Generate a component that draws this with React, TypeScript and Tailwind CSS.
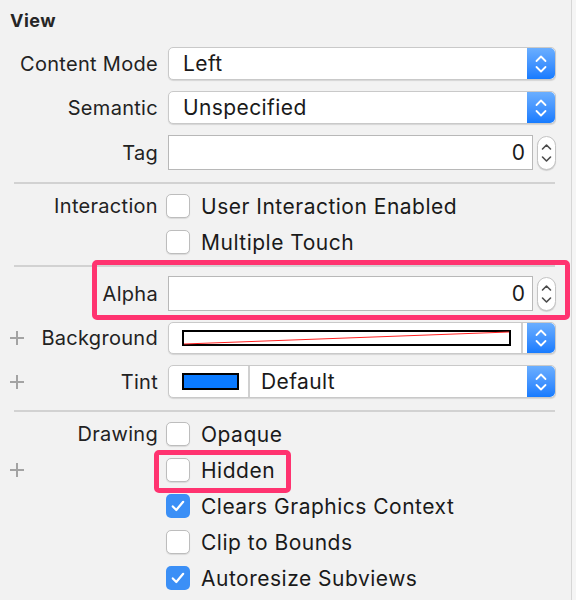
import type { ReactNode } from "react";

function Plus() {
  return (
    <svg width="14" height="14" viewBox="0 0 14 14" className="block">
      <path d="M7 0v14M0 7h14" stroke="#a3a3a3" strokeWidth="2" />
    </svg>
  );
}

function Chevrons({ color = "#fff", width = 1.8 }: { color?: string; width?: number }) {
  return (
    <svg width="12" height="22" viewBox="0 0 12 22" fill="none">
      <path d="M1.5 8 L6 3.5 L10.5 8" stroke={color} strokeWidth={width} strokeLinecap="round" strokeLinejoin="round" />
      <path d="M1.5 14 L6 18.5 L10.5 14" stroke={color} strokeWidth={width} strokeLinecap="round" strokeLinejoin="round" />
    </svg>
  );
}

function PopupArrows() {
  return (
    <div className="flex w-[28px] shrink-0 items-center justify-center self-stretch rounded-r-[5px] bg-gradient-to-b from-[#6aaeff] to-[#157bff]">
      <Chevrons />
    </div>
  );
}

function Stepper() {
  return (
    <div className="flex h-[34px] w-[19px] items-center justify-center rounded-full border border-[#c4c4c4] bg-white shadow-[0_1px_1px_rgba(0,0,0,0.15)]">
      <svg width="11" height="24" viewBox="0 0 11 24" fill="none">
        <path d="M1.5 8 L5.5 4 L9.5 8" stroke="#4a4a4a" strokeWidth="1.6" strokeLinecap="round" strokeLinejoin="round" />
        <path d="M1.5 16 L5.5 20 L9.5 16" stroke="#4a4a4a" strokeWidth="1.6" strokeLinecap="round" strokeLinejoin="round" />
      </svg>
    </div>
  );
}

function Row({ label, plus, className, children }: { label?: string; plus?: boolean; className?: string; children: ReactNode }) {
  return (
    <div className={`flex items-center ${className ?? ""}`}>
      <div className="flex w-[158px] shrink-0 items-center justify-between pl-[10px]">
        <span>{plus && <Plus />}</span>
        <span className="text-[20px] leading-none tracking-[0.3px] text-[#222]">{label}</span>
      </div>
      {children}
    </div>
  );
}

function Popup({ value }: { value: string }) {
  return (
    <div className="ml-[10px] flex h-[33px] w-[388px] items-stretch rounded-[5px] border border-[#c9c9c9] bg-white shadow-[0_1px_1px_rgba(0,0,0,0.12)]">
      <div className="flex flex-1 items-center pl-[14px] text-[21px] tracking-[0.4px] text-[#1a1a1a]">{value}</div>
      <PopupArrows />
    </div>
  );
}

function NumberField({ value }: { value: string }) {
  return (
    <div className="ml-[10px] flex items-center gap-[4px]">
      <div className="flex h-[35px] w-[365px] items-center justify-end border border-[#b8b8b8] bg-white pr-[7px] text-[21px] text-[#1a1a1a]">
        {value}
      </div>
      <Stepper />
    </div>
  );
}

function Check({ label, checked, className }: { label: string; checked?: boolean; className?: string }) {
  return (
    <div className={`flex h-[24px] items-center ${className ?? ""}`}>
      {checked ? (
        <div className="flex h-[24px] w-[24px] items-center justify-center rounded-[5px] bg-[#3b8ff6]">
          <svg width="14" height="12" viewBox="0 0 14 12" fill="none">
            <path d="M1.8 6.4 L5.3 10 L12.2 1.8" stroke="#fff" strokeWidth="2.2" strokeLinecap="round" strokeLinejoin="round" />
          </svg>
        </div>
      ) : (
        <div className="h-[24px] w-[24px] rounded-[5px] border border-[#bdbdbd] bg-white shadow-[0_1px_1px_rgba(0,0,0,0.1)]" />
      )}
      <span className="ml-[11px] text-[21px] leading-none tracking-[0.5px] text-[#1a1a1a]">{label}</span>
    </div>
  );
}

function Separator({ className }: { className?: string }) {
  return <div className={`ml-[14px] mr-[16px] h-[2px] bg-[#d2d2d2] ${className ?? ""}`} />;
}

export default function App() {
  return (
    <div className="flex h-[600px] w-[576px] overflow-hidden bg-[#f5f5f5] font-['Inter',sans-serif]">
      <div className="w-[572px] shrink-0 border-r border-[#d6d6d6] bg-[#f2f2f2]">
        <div className="h-[47px] pl-[10px] pt-[7px] text-[18px] font-bold tracking-[0.5px] text-[#262626]">View</div>

        <Row label="Content Mode" className="h-[33px]">
          <Popup value="Left" />
        </Row>
        <Row label="Semantic" className="mt-[11px] h-[33px]">
          <Popup value="Unspecified" />
        </Row>
        <Row label="Tag" className="mt-[11px] h-[35px]">
          <NumberField value="0" />
        </Row>

        <Separator className="mt-[12px]" />

        <Row label="Interaction" className="mt-[10px] h-[24px]">
          <Check label="User Interaction Enabled" className="ml-[8px]" />
        </Row>
        <Row className="mt-[12px] h-[24px]">
          <Check label="Multiple Touch" className="ml-[8px]" />
        </Row>

        <Separator className="mt-[11px]" />

        <div className="relative mt-[9px]">
          <Row label="Alpha" className="h-[35px]">
            <NumberField value="0" />
          </Row>
          <div className="pointer-events-none absolute left-[92px] top-[-16px] h-[60px] w-[478px] rounded-[5px] border-[5px] border-[#ff3370]" />
        </div>

        <Row label="Background" plus className="mt-[11px] h-[32px]">
          <div className="ml-[10px] flex h-[32px] w-[388px] items-stretch rounded-[5px] border border-[#c9c9c9] bg-white shadow-[0_1px_1px_rgba(0,0,0,0.12)]">
            <div className="flex flex-1 items-center border-r-2 border-[#d0d0d0] pl-[13px] pr-[10px]">
              <svg width="329" height="16" viewBox="0 0 329 16" className="block">
                <rect x="1" y="1" width="327" height="14" fill="#fff" stroke="#000" strokeWidth="2" />
                <path d="M2 14 L327 2" stroke="#ff2020" strokeWidth="1" />
              </svg>
            </div>
            <div className="w-[6px]" />
            <PopupArrows />
          </div>
        </Row>

        <Row label="Tint" plus className="mt-[11px] h-[33px]">
          <div className="ml-[10px] flex h-[33px] w-[388px] items-stretch rounded-[5px] border border-[#c9c9c9] bg-white shadow-[0_1px_1px_rgba(0,0,0,0.12)]">
            <div className="flex w-[81px] items-center border-r-2 border-[#d0d0d0] pl-[13px]">
              <div className="h-[17px] w-[57px] border-2 border-black bg-[#0a7aff]" />
            </div>
            <div className="flex flex-1 items-center pl-[11px] text-[21px] tracking-[0.4px] text-[#1a1a1a]">Default</div>
            <PopupArrows />
          </div>
        </Row>

        <Separator className="mt-[12px]" />

        <Row label="Drawing" className="mt-[10px] h-[24px]">
          <Check label="Opaque" className="ml-[8px]" />
        </Row>
        <div className="relative mt-[12px]">
          <Row plus className="h-[24px]">
            <Check label="Hidden" className="ml-[8px]" />
          </Row>
          <div className="pointer-events-none absolute left-[154px] top-[-8px] h-[43px] w-[137px] rounded-[5px] border-[5px] border-[#ff3370]" />
        </div>
        <Row className="mt-[12px] h-[24px]">
          <Check label="Clears Graphics Context" checked className="ml-[8px]" />
        </Row>
        <Row className="mt-[12px] h-[24px]">
          <Check label="Clip to Bounds" className="ml-[8px]" />
        </Row>
        <Row className="mt-[12px] h-[24px]">
          <Check label="Autoresize Subviews" checked className="ml-[8px]" />
        </Row>
      </div>
    </div>
  );
}
